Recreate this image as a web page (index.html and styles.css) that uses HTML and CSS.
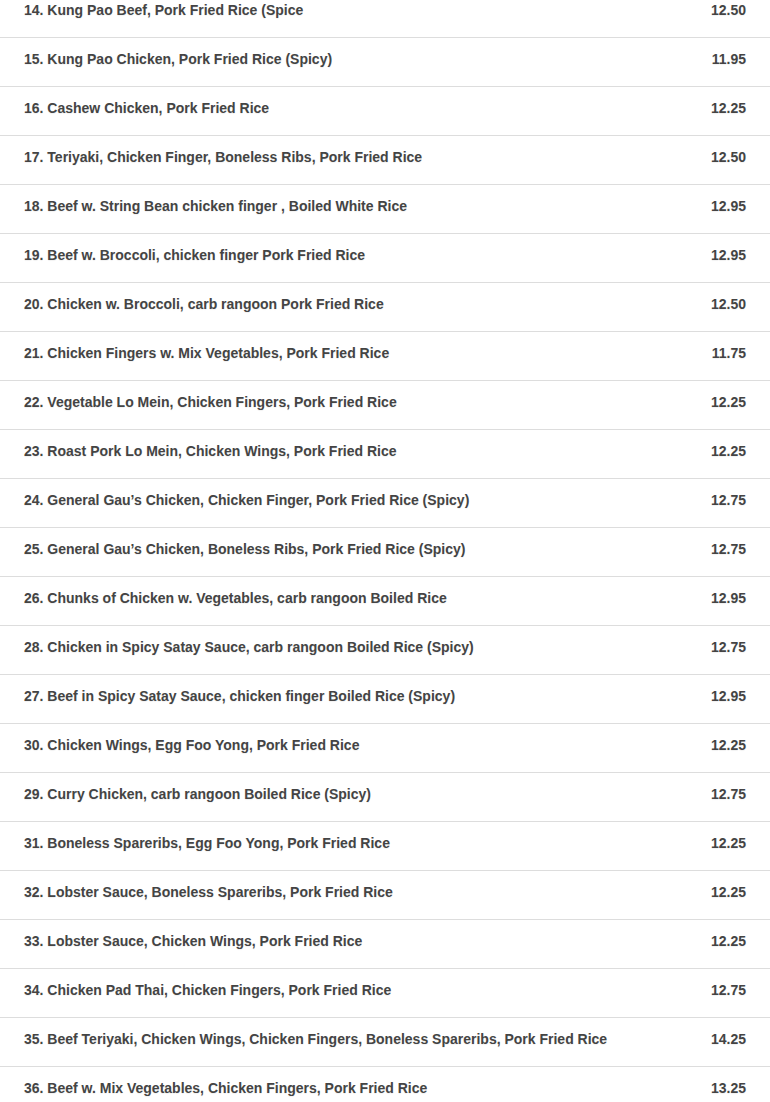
FILE: index.html
```html
<!DOCTYPE html>
<html lang="en">
<head>
  <meta charset="UTF-8" />
  <meta name="viewport" content="width=device-width, initial-scale=1.0"/>
  <title>Combination Plates</title>
  <link rel="stylesheet" href="styles.css">
</head>
<body>
  <ul class="menu-list">
    <li class="menu-item"><span class="item-name">14. Kung Pao Beef, Pork Fried Rice (Spice</span><span class="item-price">12.50</span></li>
    <li class="menu-item"><span class="item-name">15. Kung Pao Chicken, Pork Fried Rice (Spicy)</span><span class="item-price">11.95</span></li>
    <li class="menu-item"><span class="item-name">16. Cashew Chicken, Pork Fried Rice</span><span class="item-price">12.25</span></li>
    <li class="menu-item"><span class="item-name">17. Teriyaki, Chicken Finger, Boneless Ribs, Pork Fried Rice</span><span class="item-price">12.50</span></li>
    <li class="menu-item"><span class="item-name">18. Beef w. String Bean chicken finger , Boiled White Rice</span><span class="item-price">12.95</span></li>
    <li class="menu-item"><span class="item-name">19. Beef w. Broccoli, chicken finger Pork Fried Rice</span><span class="item-price">12.95</span></li>
    <li class="menu-item"><span class="item-name">20. Chicken w. Broccoli, carb rangoon Pork Fried Rice</span><span class="item-price">12.50</span></li>
    <li class="menu-item"><span class="item-name">21. Chicken Fingers w. Mix Vegetables, Pork Fried Rice</span><span class="item-price">11.75</span></li>
    <li class="menu-item"><span class="item-name">22. Vegetable Lo Mein, Chicken Fingers, Pork Fried Rice</span><span class="item-price">12.25</span></li>
    <li class="menu-item"><span class="item-name">23. Roast Pork Lo Mein, Chicken Wings, Pork Fried Rice</span><span class="item-price">12.25</span></li>
    <li class="menu-item"><span class="item-name">24. General Gau’s Chicken, Chicken Finger, Pork Fried Rice (Spicy)</span><span class="item-price">12.75</span></li>
    <li class="menu-item"><span class="item-name">25. General Gau’s Chicken, Boneless Ribs, Pork Fried Rice (Spicy)</span><span class="item-price">12.75</span></li>
    <li class="menu-item"><span class="item-name">26. Chunks of Chicken w. Vegetables, carb rangoon Boiled Rice</span><span class="item-price">12.95</span></li>
    <li class="menu-item"><span class="item-name">28. Chicken in Spicy Satay Sauce, carb rangoon Boiled Rice (Spicy)</span><span class="item-price">12.75</span></li>
    <li class="menu-item"><span class="item-name">27. Beef in Spicy Satay Sauce, chicken finger Boiled Rice (Spicy)</span><span class="item-price">12.95</span></li>
    <li class="menu-item"><span class="item-name">30. Chicken Wings, Egg Foo Yong, Pork Fried Rice</span><span class="item-price">12.25</span></li>
    <li class="menu-item"><span class="item-name">29. Curry Chicken, carb rangoon Boiled Rice (Spicy)</span><span class="item-price">12.75</span></li>
    <li class="menu-item"><span class="item-name">31. Boneless Spareribs, Egg Foo Yong, Pork Fried Rice</span><span class="item-price">12.25</span></li>
    <li class="menu-item"><span class="item-name">32. Lobster Sauce, Boneless Spareribs, Pork Fried Rice</span><span class="item-price">12.25</span></li>
    <li class="menu-item"><span class="item-name">33. Lobster Sauce, Chicken Wings, Pork Fried Rice</span><span class="item-price">12.25</span></li>
    <li class="menu-item"><span class="item-name">34. Chicken Pad Thai, Chicken Fingers, Pork Fried Rice</span><span class="item-price">12.75</span></li>
    <li class="menu-item"><span class="item-name">35. Beef Teriyaki, Chicken Wings, Chicken Fingers, Boneless Spareribs, Pork Fried Rice</span><span class="item-price">14.25</span></li>
    <li class="menu-item"><span class="item-name">36. Beef w. Mix Vegetables, Chicken Fingers, Pork Fried Rice</span><span class="item-price">13.25</span></li>
  </ul>
</body>
</html>
```

FILE: styles.css
```css
* {
  box-sizing: border-box;
  margin: 0;
  padding: 0;
}

body {
  background: #ffffff;
  font-family: 'Liberation Sans', Arial, sans-serif;
  color: #444444;
}

.menu-list {
  list-style: none;
  margin-top: -12px;
}

.menu-item {
  display: flex;
  justify-content: space-between;
  align-items: flex-start;
  gap: 20px;
  padding: 11px 24px 17px;
  border-top: 1px solid #dddddd;
  font-size: 14px;
  font-weight: 700;
  line-height: 20px;
  text-shadow: 0 1px 1px rgba(0, 0, 0, 0.06);
}

.menu-item:first-child {
  border-top: 1px solid #dddddd;
}

.item-price {
  flex-shrink: 0;
}
```
